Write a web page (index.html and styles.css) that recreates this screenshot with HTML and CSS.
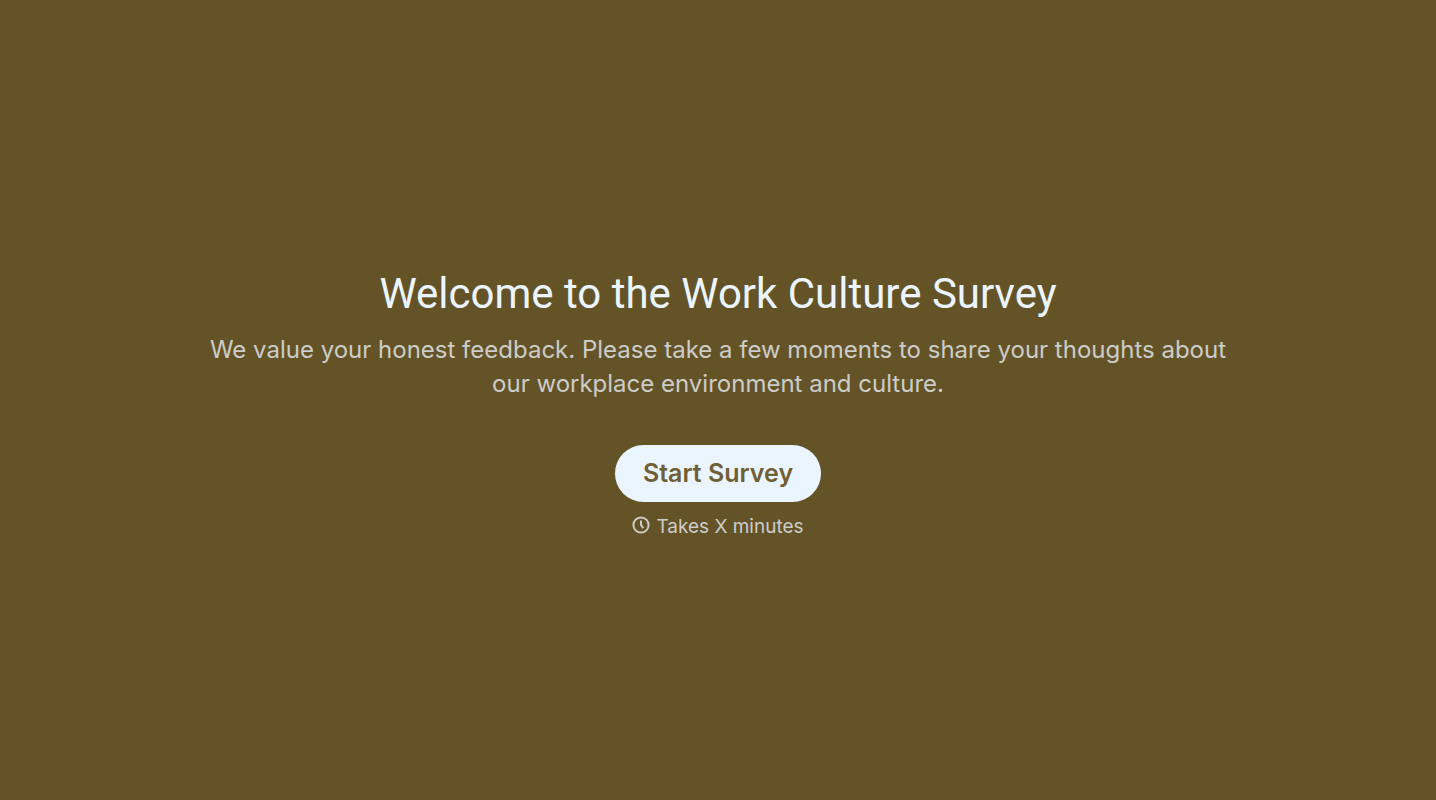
FILE: index.html
```html
<!DOCTYPE html>
<html lang="en">
<head>
    <meta charset="UTF-8">
    <meta name="viewport" content="width=device-width, initial-scale=1.0">
    <title>Work Culture Survey</title>
    <link rel="stylesheet" href="styles.css">
</head>
<body>
    <main class="welcome">
        <h1 class="welcome-title">Welcome to the Work Culture Survey</h1>
        <p class="welcome-text">We value your honest feedback. Please take a few moments to share your thoughts about our workplace environment and culture.</p>
        <button type="button" class="start-button">Start Survey</button>
        <p class="duration">
            <svg class="clock" viewBox="0 0 18 18" aria-hidden="true">
                <circle cx="9" cy="9" r="7.6"/>
                <path d="M9 4.5V9l2.3 3.2"/>
            </svg>
            <span>Takes X minutes</span>
        </p>
    </main>
</body>
</html>
```

FILE: styles.css
```css
* {
    box-sizing: border-box;
}
body {
    margin: 0;
    background-color: #655328;
    color: #eaf5ff;
    font-family: Inter, "Liberation Sans", sans-serif;
}
.welcome {
    display: flex;
    flex-direction: column;
    align-items: center;
    justify-content: center;
    min-height: 100vh;
    max-width: 1080px;
    margin: 0 auto;
    padding: 6px 24px 0;
    text-align: center;
}
.welcome-title {
    margin: 0 0 12px;
    font-family: Roboto, "Liberation Sans", sans-serif;
    font-size: 42px;
    line-height: 54px;
    font-weight: 400;
}
.welcome-text {
    margin: 0 0 44px;
    color: #cbcdc8;
    font-size: 24px;
    line-height: 34px;
}
.start-button {
    padding: 12px 28px;
    border: none;
    border-radius: 29px;
    background-color: #eaf5ff;
    color: #705e34;
    font-family: inherit;
    font-size: 25px;
    line-height: 33px;
    font-weight: 600;
    cursor: pointer;
}
.duration {
    display: flex;
    align-items: center;
    gap: 6px;
    margin: 12px 0 0;
    color: #cbcdc8;
    font-size: 19px;
    line-height: 26px;
}
.clock {
    width: 18px;
    height: 18px;
    margin-bottom: 4px;
    fill: none;
    stroke: currentColor;
    stroke-width: 2;
}
```
